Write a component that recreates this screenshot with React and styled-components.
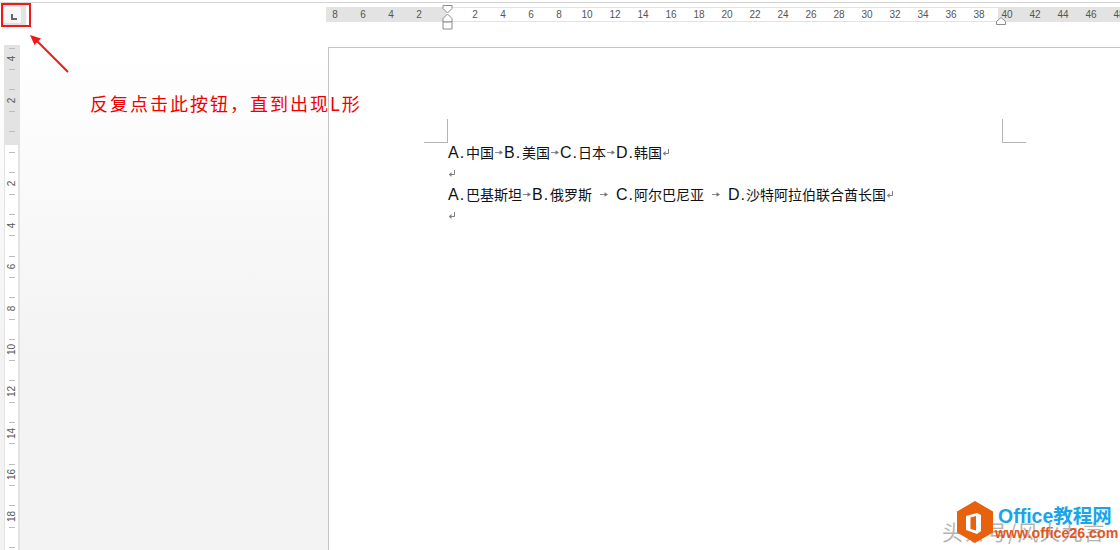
import React from 'react';
import styled, { createGlobalStyle } from 'styled-components';

const GlobalStyle = createGlobalStyle`
  html, body {
    margin: 0;
    padding: 0;
    background: #fff;
  }
  body {
    width: 1120px;
    height: 550px;
    overflow: hidden;
    font-family: "Liberation Sans", Arial, "Noto Sans CJK SC", sans-serif;
  }
`;

const Screen = styled.div`
  position: relative;
  width: 1120px;
  height: 550px;
  overflow: hidden;
  background: #fff;
`;

const Header = styled.div`
  height: 42px;
  margin-top: 2px;
  display: flex;
  align-items: flex-start;
  border-top: 1px solid #d4d4d4;
`;

const CornerSlot = styled.div`
  width: 326px;
  flex: none;
  padding: 2px 0 0 2px;
  box-sizing: border-box;
`;

const CornerBand = styled.div`
  width: 24px;
  height: 20px;
  background: #e3e3e3;
  padding: 2px 5px 2px 2px;
  box-sizing: border-box;
  display: flex;
`;

const CornerButton = styled.div`
  flex: 1;
  background: #f7f7f7;
  padding: 7px 0 0 7px;
  display: flex;
`;

const TopRuler = styled.div`
  flex: 1;
  margin-top: 4px;
  height: 15px;
  display: flex;
  position: relative;
  font-size: 10px;
  color: #555;
`;

const RulerPart = styled.div`
  display: flex;
  height: 100%;
  box-sizing: border-box;
  width: ${(p) => p.$width}px;
  flex: none;
  align-items: center;
  justify-content: ${(p) => p.$justify || 'flex-start'};
  padding: ${(p) => p.$padding || '0'};
  background: ${(p) => (p.$active ? '#fff' : '#e3e3e3')};
  border-top: ${(p) => (p.$active ? '1px solid #e3e3e3' : 'none')};
  border-bottom: ${(p) => (p.$active ? '1px solid #e3e3e3' : 'none')};
  & > :first-child {
    margin-left: ${(p) => p.$shift || 0}px;
  }
`;

const RulerNum = styled.span`
  width: 28px;
  flex: none;
  text-align: center;
  line-height: 13px;
`;

const Marker = styled.svg`
  position: absolute;
  left: ${(p) => p.$left}px;
  top: ${(p) => p.$top}px;
`;

const Workspace = styled.div`
  display: flex;
  height: 505px;
  background: linear-gradient(#fff 0, #f3f3f3 310px);
`;

const LeftRuler = styled.div`
  width: 16px;
  margin-left: 4px;
  flex: none;
  box-sizing: border-box;
  height: 100%;
  overflow: hidden;
  border-left: 1px solid #e3e3e3;
  border-right: 2px solid #e3e3e3;
  background: linear-gradient(#e3e3e3 100px, #fff 100px);
  display: flex;
  flex-direction: column;
  align-items: center;
`;

const RulerCell = styled.div`
  height: 41.6px;
  flex: none;
  display: flex;
  flex-direction: column;
  align-items: center;
  justify-content: center;
  gap: 4.7px;
  &:first-child {
    margin-top: -7px;
  }
  &::before,
  &::after {
    content: '';
    width: 6px;
    height: 1px;
    background: #bdbdbd;
  }
`;

const VerticalNum = styled.span`
  height: 11px;
  width: 11px;
  display: flex;
  align-items: center;
  justify-content: center;
  transform: rotate(-90deg);
  font-size: 10px;
  line-height: 11px;
  color: #555;
  white-space: nowrap;
`;

const Page = styled.div`
  margin: 2px 0 0 308px;
  flex: 1;
  background: #fff;
  border-top: 1px solid #c6c6c6;
  border-left: 1px solid #c6c6c6;
  padding: 71px 94px 0 95px;
`;

const CropRow = styled.div`
  display: flex;
  justify-content: space-between;
`;

const CropMark = styled.div`
  width: 23px;
  height: 23px;
  border-bottom: 1px solid #b4b4b4;
  ${(p) => (p.$right ? 'border-left' : 'border-right')}: 1px solid #b4b4b4;
`;

const Body = styled.div`
  margin: -1px 0 0 24px;
`;

const Line = styled.div`
  height: 21px;
  display: flex;
  align-items: center;
  font-size: 14px;
  color: #111;
  white-space: nowrap;
`;

const Latin = styled.span`
  width: 18px;
  flex: none;
  font-size: 16px;
  letter-spacing: 1px;
`;

const Han = styled.span`
  font-family: "Noto Sans CJK SC", sans-serif;
  font-size: 14px;
  line-height: 21px;
`;

const Tab = styled.span`
  width: ${(p) => p.$width}px;
  flex: none;
  display: flex;
  justify-content: center;
`;

const Callout = styled.div`
  position: absolute;
  left: 90px;
  top: 91px;
  font-family: "Noto Sans CJK SC", sans-serif;
  font-size: 18px;
  letter-spacing: 2px;
  line-height: 24px;
  color: #f00000;
  white-space: nowrap;
`;

const CalloutBox = styled.div`
  position: absolute;
  left: 1px;
  top: 3px;
  width: 30px;
  height: 24px;
  box-sizing: border-box;
  border: 2px solid #f01818;
`;

const CalloutArrow = styled.svg`
  position: absolute;
  left: 26px;
  top: 30px;
`;

const Watermark = styled.div`
  position: absolute;
  left: 942px;
  top: 500px;
  width: 178px;
  height: 50px;
`;

const WatermarkShade = styled.div`
  position: absolute;
  left: 0;
  top: 18px;
  font-family: "Noto Sans CJK SC", sans-serif;
  font-size: 21px;
  line-height: 26px;
  letter-spacing: 1px;
  color: #b4b4b4;
  white-space: nowrap;
`;

const BrandIcon = styled.svg`
  position: absolute;
  left: 15px;
  top: 1px;
`;

const BrandName = styled.div`
  position: absolute;
  left: 56px;
  top: 5px;
  font-size: 19.5px;
  line-height: 22px;
  font-weight: bold;
  color: #18a5ea;
  white-space: nowrap;
`;

const BrandUrl = styled.div`
  position: absolute;
  left: 53px;
  top: 26px;
  font-size: 14.2px;
  line-height: 14px;
  font-weight: bold;
  color: #e4561c;
  white-space: nowrap;
`;

const TabArrow = () => (
  <svg width="10" height="7" viewBox="0 0 10 7">
    <path d="M1 3.5h5" stroke="#8a8a8a" fill="none" />
    <path d="M5.5 1.2L9 3.5L5.5 5.8z" fill="#777" />
  </svg>
);

const ReturnMark = () => (
  <svg width="8" height="9" viewBox="0 0 8 9">
    <path d="M6.5 1v4.5H2" stroke="#808080" fill="none" />
    <path d="M3.5 3L.8 5.5L3.5 8z" fill="#808080" />
  </svg>
);

const leftNums = [8, 6, 4, 2];
const midNums = [2, 4, 6, 8, 10, 12, 14, 16, 18, 20, 22, 24, 26, 28, 30, 32, 34, 36, 38];
const rightNums = [40, 42, 44, 46, 48];
const sideNums = [4, 2, '', 2, 4, 6, 8, 10, 12, 14, 16, 18, ''];

export default function App() {
  return (
    <Screen>
      <GlobalStyle />
      <Header>
        <CornerSlot>
          <CornerBand>
            <CornerButton>
              <svg width="6" height="6" viewBox="0 0 6 6">
                <path d="M0 0h2v4h4v2H0z" fill="#666" />
              </svg>
            </CornerButton>
          </CornerBand>
        </CornerSlot>
        <TopRuler>
          <RulerPart $width={120} $justify="flex-end" $padding="0 13px 0 0">
            {leftNums.map((n) => (
              <RulerNum key={n}>{n}</RulerNum>
            ))}
          </RulerPart>
          <RulerPart $width={552} $active $padding="0 0 0 15px">
            {midNums.map((n) => (
              <RulerNum key={n}>{n}</RulerNum>
            ))}
          </RulerPart>
          <RulerPart $width={122} $shift={-5}>
            {rightNums.map((n) => (
              <RulerNum key={n}>{n}</RulerNum>
            ))}
          </RulerPart>
          <Marker $left={116} $top={-2} width="11" height="25" viewBox="0 0 11 25">
            <path d="M1 .5h9v3L5.500 8 1 3.500z" fill="#fff" stroke="#8c8c8c" />
            <path d="M5.500 9L10 13.500V17H1v-3.500z" fill="#fff" stroke="#8c8c8c" />
            <path d="M1 17h9v7H1z" fill="#fff" stroke="#8c8c8c" />
          </Marker>
          <Marker $left={670} $top={10} width="10" height="8" viewBox="0 0 10 8">
            <path d="M5 .5L9.500 4.500V7.500H.5V4.500z" fill="#fff" stroke="#8c8c8c" />
          </Marker>
        </TopRuler>
      </Header>
      <Workspace>
        <LeftRuler>
          {sideNums.map((n, i) => (
            <RulerCell key={i}>
              <VerticalNum>{n}</VerticalNum>
            </RulerCell>
          ))}
        </LeftRuler>
        <Page>
          <CropRow>
            <CropMark />
            <CropMark $right />
          </CropRow>
          <Body>
            <Line>
              <Latin>A.</Latin><Han>中国</Han><Tab $width={10}><TabArrow /></Tab>
              <Latin>B.</Latin><Han>美国</Han><Tab $width={10}><TabArrow /></Tab>
              <Latin>C.</Latin><Han>日本</Han><Tab $width={10}><TabArrow /></Tab>
              <Latin>D.</Latin><Han>韩国</Han><ReturnMark />
            </Line>
            <Line><ReturnMark /></Line>
            <Line>
              <Latin>A.</Latin><Han>巴基斯坦</Han><Tab $width={10}><TabArrow /></Tab>
              <Latin>B.</Latin><Han>俄罗斯</Han><Tab $width={24}><TabArrow /></Tab>
              <Latin>C.</Latin><Han>阿尔巴尼亚</Han><Tab $width={24}><TabArrow /></Tab>
              <Latin>D.</Latin><Han>沙特阿拉伯联合酋长国</Han><ReturnMark />
            </Line>
            <Line><ReturnMark /></Line>
          </Body>
        </Page>
      </Workspace>

      <CalloutBox />
      <CalloutArrow width="46" height="46" viewBox="0 0 46 46">
        <path d="M42 42L10 10" stroke="#f01818" strokeWidth="2" fill="none" />
        <path d="M4 5l11 3.500-6.500 6.500z" fill="#f01818" />
      </CalloutArrow>
      <Callout>反复点击此按钮，直到出现L形</Callout>

      <Watermark>
        <WatermarkShade>头条号/风火九言</WatermarkShade>
        <BrandIcon width="36" height="42" viewBox="0 0 36 42">
          <path d="M18 0L36 10.500V31.500L18 42L0 31.500V10.500z" fill="#e8610c" />
          <path d="M9 15L20 12L24 14V30L20 33L9 29z" fill="#fff" />
          <path d="M13.500 16.500L19 15V29.500L13.500 28z" fill="#e8610c" />
        </BrandIcon>
        <BrandName>Office教程网</BrandName>
        <BrandUrl>www.office26.com</BrandUrl>
      </Watermark>
    </Screen>
  );
}
